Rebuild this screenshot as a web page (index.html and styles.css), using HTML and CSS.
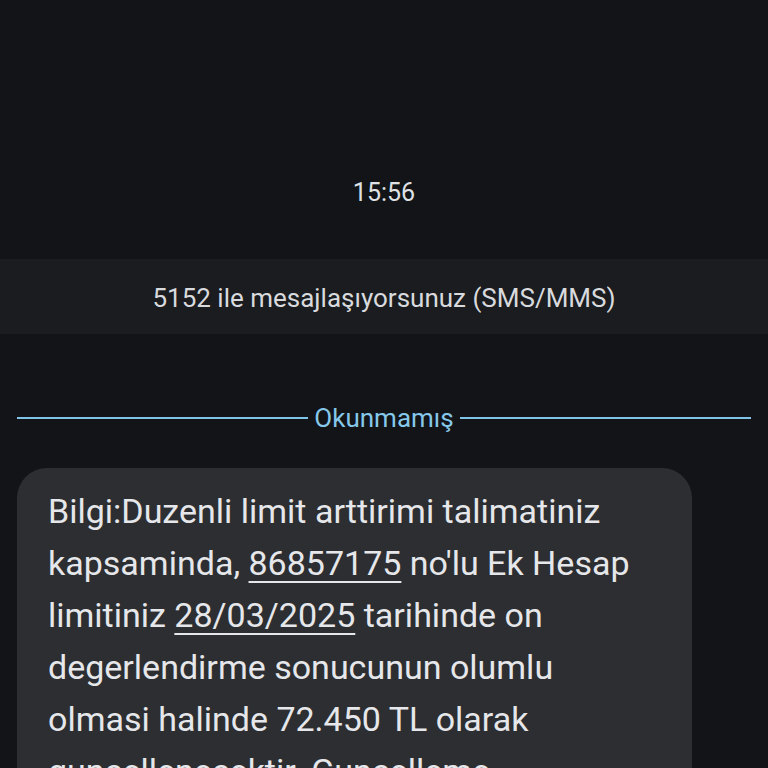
FILE: index.html
```html
<!DOCTYPE html>
<html lang="tr">
<head>
<meta charset="utf-8">
<title>5152</title>
<link rel="stylesheet" href="styles.css">
</head>
<body>
<div class="screen">
  <div class="time">15:56</div>
  <div class="band">5152 ile mesajlaşıyorsunuz (SMS/MMS)</div>
  <div class="divider">
    <span class="rule"></span>
    <span class="label">Okunmamış</span>
    <span class="rule"></span>
  </div>
  <div class="bubble">
    <p class="msg">Bilgi:Duzenli limit arttirimi talimatiniz<br>kapsaminda, <span class="link">86857175</span> no'lu Ek Hesap<br>limitiniz <span class="link">28/03/2025</span> tarihinde on<br>degerlendirme sonucunun olumlu<br>olmasi halinde 72.450 TL olarak<br>guncellenecektir. Guncelleme<br>sonrasi ek hesap limitiniz</p>
  </div>
</div>
</body>
</html>
```

FILE: styles.css
```css
html, body {
  margin: 0;
  padding: 0;
  background: #121417;
  overflow: hidden;
}

.screen {
  width: 768px;
  height: 768px;
  overflow: hidden;
  display: flex;
  flex-direction: column;
  font-family: Roboto, "Noto Sans", "Liberation Sans", sans-serif;
  color: #e2e3e6;
}

.screen > * {
  flex-shrink: 0;
}

.time {
  padding-top: 178px;
  height: 259px;
  box-sizing: border-box;
  font-size: 25px;
  line-height: 30px;
  text-align: center;
  color: #dfe1e4;
}

.band {
  height: 75px;
  box-sizing: border-box;
  padding-top: 24px;
  background: #1a1c1f;
  font-size: 26px;
  line-height: 30px;
  text-align: center;
  color: #d8dadd;
}

.divider {
  margin-top: 69px;
  height: 30px;
  display: flex;
  align-items: center;
  gap: 6px;
  padding: 0 17px;
}

.rule {
  flex: 1;
  height: 2px;
  background: #7fc3e6;
}

.label {
  font-size: 26px;
  line-height: 30px;
  color: #86c8ea;
}

.bubble {
  margin: 35px 0 0 17px;
  width: 675px;
  box-sizing: border-box;
  padding: 17px 31px 40px;
  background: #2c2e31;
  border-radius: 30px;
}

.msg {
  margin: 0;
  font-size: 34px;
  line-height: 52px;
  color: #e6e7ea;
  white-space: nowrap;
}

.link {
  text-decoration: underline;
  text-decoration-thickness: 2px;
  text-underline-offset: 6px;
}
```
